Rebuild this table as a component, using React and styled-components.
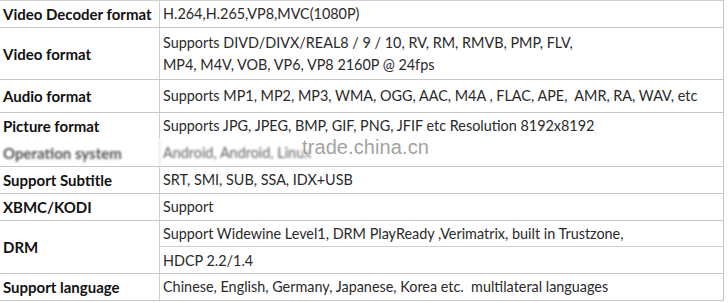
import React from "react";
import styled, { createGlobalStyle } from "styled-components";

const GlobalStyle = createGlobalStyle`
  html, body {
    margin: 0;
    padding: 0;
    background: #ffffff;
  }
  body {
    font-family: "Lato", "Liberation Sans", sans-serif;
  }
`;

const Page = styled.div`
  position: relative;
  width: 728px;
  height: 303px;
  overflow: hidden;
  background: #fff;
`;

const Table = styled.div`
  width: 723px;
  border-top: 1px solid #cfcfcf;
  border-right: 1px solid #c4c4c4;
  display: flex;
  flex-direction: column;
`;

const Row = styled.div`
  display: grid;
  grid-template-columns: 160px 1fr;
  height: ${(p) => p.$h}px;
  border-bottom: 1px solid ${(p) => (p.$noLine ? "transparent" : "#c8c8c8")};
  box-sizing: border-box;
`;

const Label = styled.div`
  display: flex;
  align-items: center;
  padding: 0 0 0 3px;
  border-right: 1px solid #cdcdcd;
  font-weight: 700;
  font-size: 15px;
  color: #111;
  white-space: nowrap;
  filter: ${(p) => (p.$blur ? "blur(1.1px)" : "none")};
  opacity: ${(p) => (p.$blur ? 0.75 : 1)};
`;

const Value = styled.div`
  display: flex;
  flex-direction: column;
  justify-content: center;
  padding-left: 3px;
  font-size: 14.4px;
  color: #2a2a2a;
  white-space: pre;
  filter: ${(p) => (p.$blur ? "blur(1.1px)" : "none")};
  opacity: ${(p) => (p.$blur ? 0.75 : 1)};
`;

const Line = styled.div`
  line-height: 22px;
`;

const SubCells = styled.div`
  display: grid;
  grid-template-rows: 1fr 1fr;
  height: 100%;
`;

const SubCell = styled.div`
  display: flex;
  align-items: center;
  padding-left: 3px;
  font-size: 14.4px;
  color: #2a2a2a;
  border-bottom: ${(p) => (p.$last ? "none" : "1px solid #d0d0d0")};
`;

const Watermark = styled.div`
  position: absolute;
  left: 302px;
  top: 137px;
  font-family: "Liberation Sans", Arial, sans-serif;
  font-size: 20px;
  line-height: 20px;
  color: #a3a3a3;
  letter-spacing: 0.1px;
  text-shadow: 0 0 4px #fff, 0 0 6px #fff;
  pointer-events: none;
`;

const rows = [
  { label: "Video Decoder format", h: 27, lines: ["H.264,H.265,VP8,MVC(1080P)"] },
  {
    label: "Video format",
    h: 52,
    lines: [
      "Supports DIVD/DIVX/REAL8 / 9 / 10, RV, RM, RMVB, PMP, FLV,",
      "MP4, M4V, VOB, VP6, VP8 2160P @ 24fps",
    ],
  },
  {
    label: "Audio format",
    h: 33,
    lines: ["Supports MP1, MP2, MP3, WMA, OGG, AAC, M4A , FLAC, APE,  AMR, RA, WAV, etc"],
  },
  {
    label: "Picture format",
    h: 27,
    noLine: true,
    lines: ["Supports JPG, JPEG, BMP, GIF, PNG, JFIF etc Resolution 8192x8192"],
  },
  { label: "Operation system", h: 27, blur: true, lines: ["Android, Android, Linux"] },
  { label: "Support Subtitle", h: 27, lines: ["SRT, SMI, SUB, SSA, IDX+USB"] },
  { label: "XBMC/KODI", h: 27, lines: ["Support"] },
  {
    label: "DRM",
    h: 53,
    sub: [
      "Support Widewine Level1, DRM PlayReady ,Verimatrix, built in Trustzone,",
      "HDCP 2.2/1.4",
    ],
  },
  {
    label: "Support language",
    h: 27,
    lines: ["Chinese, English, Germany, Japanese, Korea etc.  multilateral languages"],
  },
];

export default function App() {
  return (
    <Page>
      <GlobalStyle />
      <Table>
        {rows.map((r) => (
          <Row key={r.label} $h={r.h} $noLine={r.noLine}>
            <Label $blur={r.blur}>{r.label}</Label>
            {r.sub ? (
              <SubCells>
                {r.sub.map((s, i) => (
                  <SubCell key={s} $last={i === r.sub.length - 1}>
                    {s}
                  </SubCell>
                ))}
              </SubCells>
            ) : (
              <Value $blur={r.blur}>
                {r.lines.map((l) => (
                  <Line key={l}>{l}</Line>
                ))}
              </Value>
            )}
          </Row>
        ))}
      </Table>
      <Watermark>trade.china.cn</Watermark>
    </Page>
  );
}
